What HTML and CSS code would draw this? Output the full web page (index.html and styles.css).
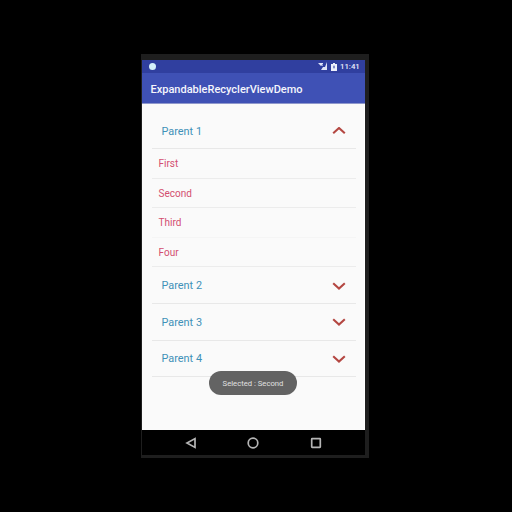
FILE: index.html
```html
<!DOCTYPE html>
<html lang="en">
<head>
<meta charset="utf-8">
<title>ExpandableRecyclerViewDemo</title>
<link rel="stylesheet" href="styles.css">
</head>
<body>
<div class="device">
  <div class="screen">
    <div class="status">
      <span class="dot"></span>
      <svg class="signal" width="10" height="9" viewBox="0 0 10 9"><path d="M0 1h5v3H3zM9 0v8H3l2-3h2z" fill="#dfe4f7"/><path d="M6 1l-4 5" stroke="#303f9f" stroke-width=".8"/></svg>
      <svg class="battery" width="6" height="8" viewBox="0 0 6 8"><path d="M0 1h2V0h2v1h2v7H0z" fill="#edf0fb"/><path d="M3 2.5v3M2 4h2" fill="none" stroke="#5360b0" stroke-width=".9"/></svg>
      <span class="time">11:41</span>
    </div>
    <header class="appbar"><span class="title">ExpandableRecyclerViewDemo</span></header>
    <main class="list">
      <div class="parent first"><span>Parent 1</span><svg class="chev" width="14" height="8" viewBox="0 0 14 8"><path d="M1.2 6.3L7 1l5.8 5.3"/></svg></div>
      <div class="child">First</div>
      <div class="child">Second</div>
      <div class="child faint">Third</div>
      <div class="child">Four</div>
      <div class="parent"><span>Parent 2</span><svg class="chev" width="14" height="8" viewBox="0 0 14 8"><path d="M1.2 1.2L7 6.5l5.8-5.3"/></svg></div>
      <div class="parent"><span>Parent 3</span><svg class="chev" width="14" height="8" viewBox="0 0 14 8"><path d="M1.2 1.2L7 6.5l5.8-5.3"/></svg></div>
      <div class="parent"><span>Parent 4</span><svg class="chev" width="14" height="8" viewBox="0 0 14 8"><path d="M1.2 1.2L7 6.5l5.8-5.3"/></svg></div>
      <div class="toast">Selected : Second</div>
    </main>
    <nav class="nav">
      <svg width="12" height="12" viewBox="0 0 12 12"><path d="M10 1.6v8.8L2 6z"/></svg>
      <svg width="12" height="12" viewBox="0 0 12 12"><circle cx="6" cy="6" r="4.8"/></svg>
      <svg width="12" height="12" viewBox="0 0 12 12"><rect x="1.7" y="1.7" width="8.6" height="8.6" rx=".5"/></svg>
    </nav>
  </div>
</div>
</body>
</html>
```
FILE: styles.css
```css
* { box-sizing: border-box; }
body {
  margin: 0;
  height: 512px;
  padding: 54px 0 0 141px;
  background: #000;
  font-family: Roboto, "Liberation Sans", sans-serif;
  overflow: hidden;
}
.device {
  width: 228px;
  height: 404px;
  padding: 6px 4px 3px 1px;
  background: #1e1e1e;
  border-top: 0;
}
.screen { display: flex; flex-direction: column; height: 395px; }
.status {
  height: 13px;
  display: flex;
  align-items: center;
  padding: 0 5px 0 7px;
  background: #303f9f;
  color: #e8ebfa;
}
.dot { width: 7px; height: 7px; border-radius: 50%; background: #d5f0fa; }
.signal { margin-left: auto; }
.battery { margin-left: 3px; }
.time { margin-left: 3px; width: 20px; font-size: 7.8px; font-weight: 500; line-height: 14px; white-space: nowrap; }
.appbar {
  height: 31px;
  padding-left: 8.5px;
  background: #3f51b5;
  border-bottom: 1px solid #8f98cc;
  color: #f5f6fc;
}
.title { display: block; font-size: 11px; font-weight: 500; line-height: 33px; white-space: nowrap; }
.list {
  position: relative;
  height: 326px;
  padding: 9px 8px 0 10px;
  background: #fafafa;
  border-right: 1px solid #fff;
}
.parent {
  height: 36.6px;
  display: flex;
  align-items: center;
  justify-content: space-between;
  padding: 1px 10.5px 0 9.5px;
  border-bottom: 1px solid #e8e8e8;
  color: #3f91b8;
  font-size: 10.9px;
}
.parent.first { height: 36px; }
.chev { fill: none; stroke: #b44742; stroke-width: 2.1; }
.child {
  height: 29.6px;
  padding-left: 6.5px;
  border-bottom: 1px solid #ececec;
  color: #d34e70;
  font-size: 10px;
  line-height: 30.5px;
}
.child.faint { border-bottom-color: #f5f5f5; }
.toast {
  position: absolute;
  left: 67px;
  top: 267px;
  width: 88px;
  height: 24px;
  border-radius: 12px;
  background: #636363;
  color: #e0e0e0;
  font-size: 7.7px;
  line-height: 25px;
  text-align: center;
  white-space: nowrap;
}
.nav {
  height: 25px;
  display: flex;
  align-items: center;
  gap: 50.5px;
  padding-left: 42.5px;
  background: #000;
}
.nav svg { fill: none; stroke: #b5b5b5; stroke-width: 1.7; }
```
